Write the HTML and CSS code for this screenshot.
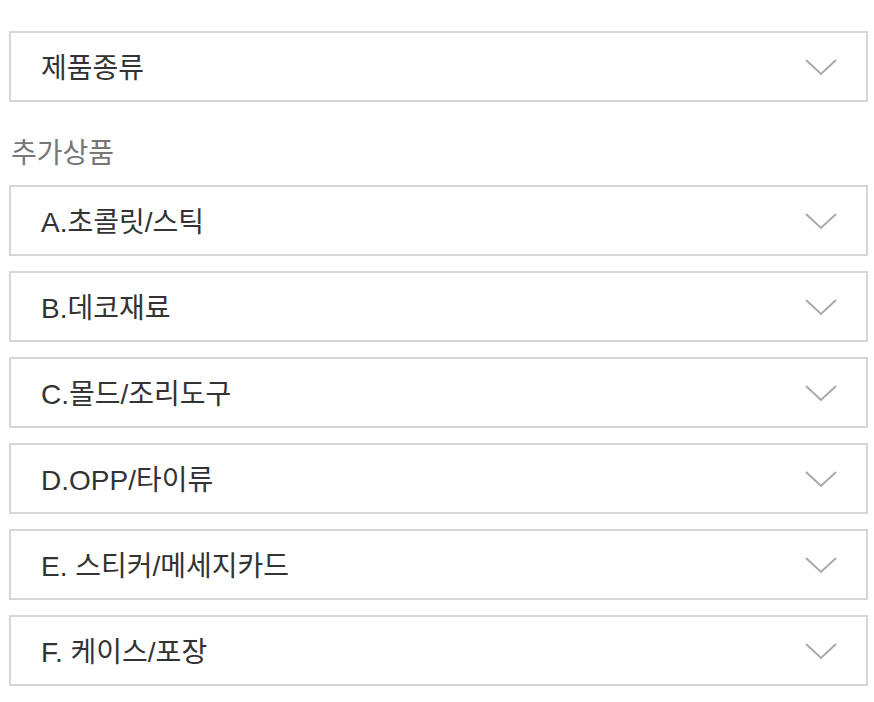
FILE: index.html
```html
<!DOCTYPE html>
<html lang="ko">
<head>
<meta charset="utf-8">
<link rel="stylesheet" href="styles.css">
</head>
<body>
<div class="page">
  <div class="select"><span class="select-text">제품종류</span><svg class="chev" viewBox="0 0 32 18" width="32" height="18"><polyline points="1,2 16,16 31,2" fill="none" stroke="#a9a9a9" stroke-width="2"/></svg></div>
  <div class="label">추가상품</div>
  <div class="list">
    <div class="select"><span class="select-text">A.초콜릿/스틱</span><svg class="chev" viewBox="0 0 32 18" width="32" height="18"><polyline points="1,2 16,16 31,2" fill="none" stroke="#a9a9a9" stroke-width="2"/></svg></div>
    <div class="select"><span class="select-text">B.데코재료</span><svg class="chev" viewBox="0 0 32 18" width="32" height="18"><polyline points="1,2 16,16 31,2" fill="none" stroke="#a9a9a9" stroke-width="2"/></svg></div>
    <div class="select"><span class="select-text">C.몰드/조리도구</span><svg class="chev" viewBox="0 0 32 18" width="32" height="18"><polyline points="1,2 16,16 31,2" fill="none" stroke="#a9a9a9" stroke-width="2"/></svg></div>
    <div class="select"><span class="select-text">D.OPP/타이류</span><svg class="chev" viewBox="0 0 32 18" width="32" height="18"><polyline points="1,2 16,16 31,2" fill="none" stroke="#a9a9a9" stroke-width="2"/></svg></div>
    <div class="select"><span class="select-text">E. 스티커/메세지카드</span><svg class="chev" viewBox="0 0 32 18" width="32" height="18"><polyline points="1,2 16,16 31,2" fill="none" stroke="#a9a9a9" stroke-width="2"/></svg></div>
    <div class="select"><span class="select-text">F. 케이스/포장</span><svg class="chev" viewBox="0 0 32 18" width="32" height="18"><polyline points="1,2 16,16 31,2" fill="none" stroke="#a9a9a9" stroke-width="2"/></svg></div>
  </div>
</div>
</body>
</html>
```
FILE: styles.css
```css
html, body {
  margin: 0;
  padding: 0;
  background: #ffffff;
}
.page {
  padding: 31px 6px 0 9px;
  font-family: "Liberation Sans", "Noto Sans CJK KR", sans-serif;
}
.select {
  box-sizing: border-box;
  height: 71px;
  border: 2px solid #d6d6d6;
  display: flex;
  align-items: center;
  justify-content: space-between;
  padding: 0 29px 0 30px;
}
.select-text {
  font-size: 28px;
  line-height: 34px;
  color: #333333;
  margin-top: 4px;
}
.chev {
  display: block;
  margin-top: 0;
}
.label {
  margin: 35px 0 14px 2px;
  height: 34px;
  line-height: 34px;
  font-size: 28px;
  color: #777777;
}
.list {
  display: flex;
  flex-direction: column;
  gap: 15px;
}
```
